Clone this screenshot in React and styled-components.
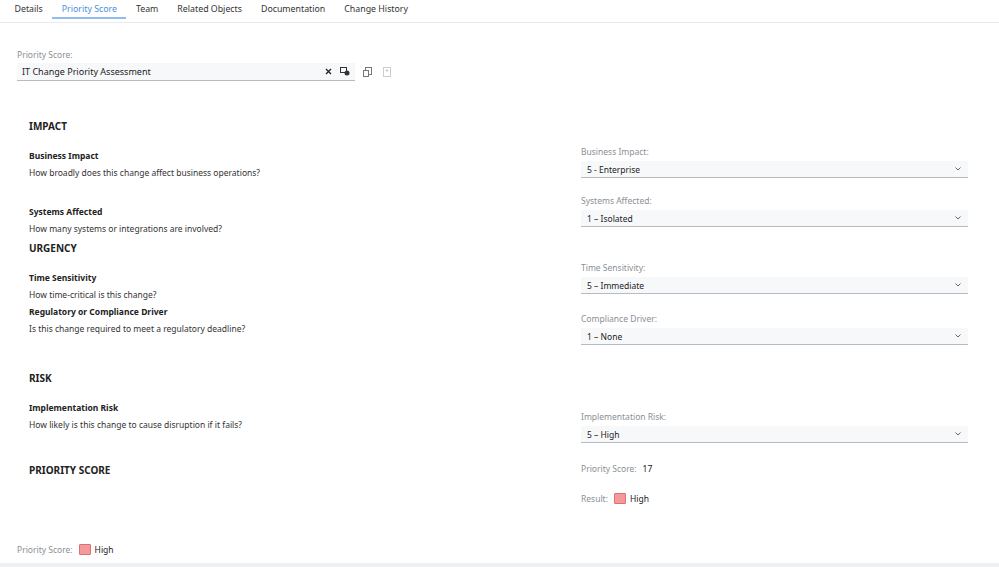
import React from 'react'
import styled, { createGlobalStyle } from 'styled-components'

const Global = createGlobalStyle`
  body { margin: 0; background: #fff; font-family: 'Noto Sans', 'Open Sans', sans-serif; color: #222; }
`

const Page = styled.div`
  width: 999px;
  height: 567px;
  position: relative;
  overflow: hidden;
`

const Tabs = styled.div`
  display: flex;
  height: 22px;
  padding-left: 5px;
  border-bottom: 1px solid #e8eaee;
`

const Tab = styled.div`
  padding: 3px 9.5px 0;
  font-size: 8.8px;
  color: ${({ active }) => (active ? '#4a8fe0' : '#333')};
  border-bottom: 2px solid ${({ active }) => (active ? '#8fbdf0' : 'transparent')};
  height: 19px;
  box-sizing: border-box;
`

const Header = styled.div`
  padding: 26px 0 0 17px;
`

const Label = styled.div`
  font-size: 8.5px;
  color: #8a8f96;
`

const InputRow = styled.div`
  display: flex;
  align-items: center;
  margin-top: 3px;
`

const Input = styled.div`
  width: 338px;
  height: 18px;
  box-sizing: border-box;
  display: flex;
  align-items: center;
  justify-content: space-between;
  padding: 0 5px;
  background: #f7f8f9;
  border-bottom: 1px solid #b8bcc2;
  font-size: 9px;
`

const Icons = styled.div`
  display: flex;
  align-items: center;
  gap: 8px;
  color: #333;
`

const Body = styled.div`
  padding: 38px 32px 0 29px;
`

const Row = styled.div`
  display: grid;
  grid-template-columns: 552px 387px;
  margin-top: ${({ mt }) => mt || 0}px;
`

const Heading = styled.div`
  font-size: 10px;
  font-weight: 700;
  color: #222;
  height: 14px;
`

const Q = styled.div`
  font-size: 8.5px;
  font-weight: 700;
  margin-top: ${({ mt }) => mt || 0}px;
`

const Desc = styled.div`
  font-size: 8.5px;
  margin-top: 6px;
  color: #333;
`

const Field = styled.div`
  margin-top: ${({ mt }) => mt || 0}px;
`

const Select = styled.div`
  margin-top: 4px;
  height: 17px;
  box-sizing: border-box;
  background: #f7f8f9;
  border-bottom: 1px solid #b8bcc2;
  display: flex;
  align-items: center;
  justify-content: space-between;
  padding: 0 6px;
  font-size: 8.5px;
`

const Inline = styled.div`
  display: flex;
  align-items: center;
  gap: 6px;
  font-size: 8.5px;
  margin-top: ${({ mt }) => mt || 0}px;
`

const Swatch = styled.span`
  width: 10px;
  height: 9px;
  background: #f49a9a;
  border: 1px solid #e07070;
  border-radius: 1px;
  display: inline-block;
`

const Footer = styled.div`
  position: absolute;
  left: 17px;
  top: 544px;
`

const BottomBar = styled.div`
  position: absolute;
  left: 0;
  right: 0;
  bottom: 0;
  height: 4px;
  background: #eef0f3;
`

const Chevron = () => (
  <svg width="8" height="6" viewBox="0 0 8 6"><path d="M1.5 1.5 4 4l2.5-2.5" fill="none" stroke="#666" strokeWidth="1" /></svg>
)

const SelectBox = ({ label, value, mt }) => (
  <Field mt={mt}>
    <Label>{label}</Label>
    <Select>{value}<Chevron /></Select>
  </Field>
)

const Result = ({ label, mt }) => (
  <Inline mt={mt}>
    <Label>{label}</Label>
    <span style={{ display: 'flex', alignItems: 'center', gap: 4 }}><Swatch />High</span>
  </Inline>
)

export default function App() {
  return (
    <Page>
      <Global />
      <Tabs>
        {['Details', 'Priority Score', 'Team', 'Related Objects', 'Documentation', 'Change History'].map((t) => (
          <Tab key={t} active={t === 'Priority Score'}>{t}</Tab>
        ))}
      </Tabs>
      <Header>
        <Label>Priority Score:</Label>
        <InputRow>
          <Input>
            IT Change Priority Assessment
            <Icons>
              <svg width="7" height="7" viewBox="0 0 7 7"><path d="M1 1l5 5M6 1L1 6" stroke="#222" strokeWidth="1.3" /></svg>
              <svg width="10" height="9" viewBox="0 0 10 9"><rect x="0.5" y="0.5" width="6" height="5" fill="none" stroke="#333" /><circle cx="7" cy="6" r="2.5" fill="#333" /></svg>
            </Icons>
          </Input>
          <Icons style={{ marginLeft: 8, gap: 11 }}>
            <svg width="9" height="10" viewBox="0 0 9 10"><rect x="2.5" y="0.5" width="6" height="7" fill="none" stroke="#777" /><rect x="0.5" y="3.5" width="5" height="6" fill="#fff" stroke="#777" /></svg>
            <svg width="8" height="10" viewBox="0 0 8 10"><rect x="0.5" y="0.5" width="7" height="9" fill="none" stroke="#ccc" /><path d="M4 2v3M2.5 3.5h3" stroke="#ccc" /></svg>
          </Icons>
        </InputRow>
      </Header>
      <Body>
        <Heading>IMPACT</Heading>
        <Row mt={10}>
          <div><Q mt={7}>Business Impact</Q><Desc>How broadly does this change affect business operations?</Desc></div>
          <SelectBox mt={3} label="Business Impact:" value="5 - Enterprise" />
        </Row>
        <Row>
          <div><Q mt={28}>Systems Affected</Q><Desc>How many systems or integrations are involved?</Desc></div>
          <SelectBox mt={17} label="Systems Affected:" value="1 – Isolated" />
        </Row>
        <Row mt={7}>
          <div>
            <Heading>URGENCY</Heading>
            <Q mt={17}>Time Sensitivity</Q><Desc>How time-critical is this change?</Desc>
            <Q mt={6}>Regulatory or Compliance Driver</Q><Desc>Is this change required to meet a regulatory deadline?</Desc>
          </div>
          <div>
            <SelectBox mt={21} label="Time Sensitivity:" value="5 – Immediate" />
            <SelectBox mt={19} label="Compliance Driver:" value="1 – None" />
          </div>
        </Row>
        <Row mt={26}>
          <div>
            <Heading>RISK</Heading>
            <Q mt={17}>Implementation Risk</Q><Desc>How likely is this change to cause disruption if it fails?</Desc>
          </div>
          <SelectBox mt={40} label="Implementation Risk:" value="5 – High" />
        </Row>
        <Row mt={20}>
          <Heading>PRIORITY SCORE</Heading>
          <div>
            <Inline><Label>Priority Score:</Label>17</Inline>
            <Result mt={19} label="Result:" />
          </div>
        </Row>
      </Body>
      <Footer><Result label="Priority Score:" /></Footer>
      <BottomBar />
    </Page>
  )
}
